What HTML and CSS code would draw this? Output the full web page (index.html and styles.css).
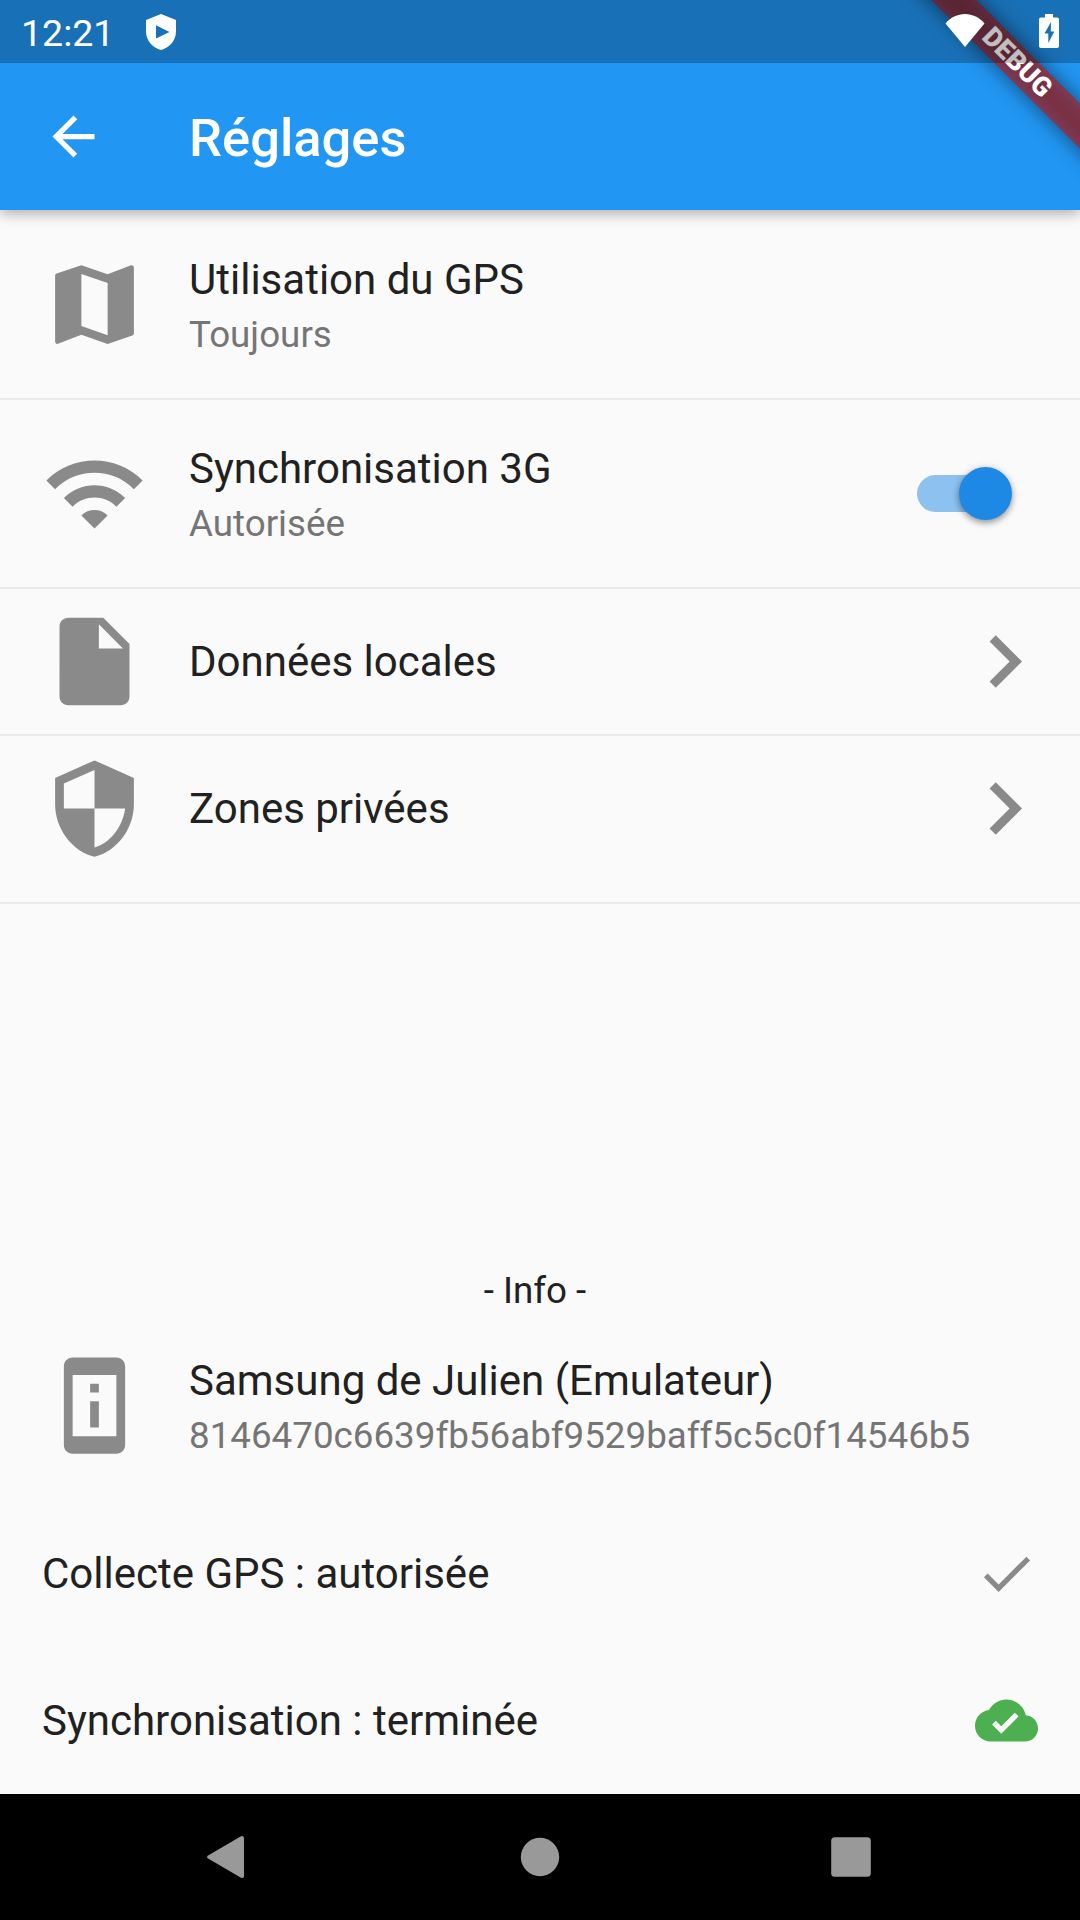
FILE: index.html
```html
<!DOCTYPE html>
<html lang="fr">
<head>
<meta charset="utf-8">
<title>Réglages</title>
<link rel="stylesheet" href="styles.css">
</head>
<body>
<div class="screen">
  <header class="app-bar">
    <svg class="icon-small" viewBox="0 0 24 24"><path d="M20 11H7.83l5.59-5.59L12 4l-8 8 8 8 1.41-1.41L7.83 13H20v-2z"/></svg>
    <h1 class="app-title">Réglages</h1>
  </header>

  <main class="content">
    <section class="settings">
      <div class="tile tall divided">
        <svg class="icon" viewBox="0 0 24 24"><path d="M20.5 3l-.16.03L15 5.1 9 3 3.36 4.9c-.21.07-.36.25-.36.48V20.5c0 .28.22.5.5.5l.16-.03L9 18.9l6 2.1 5.64-1.9c.21-.07.36-.25.36-.48V3.5c0-.28-.22-.5-.5-.5zM15 19l-6-2.11V5l6 2.11V19z"/></svg>
        <div class="texts two-line"><div class="title">Utilisation du GPS</div><div class="subtitle">Toujours</div></div>
      </div>
      <div class="tile tall divided">
        <svg class="icon" viewBox="0 0 24 24"><path d="M1 9l2 2c4.97-4.97 13.03-4.97 18 0l2-2C16.93 2.93 7.08 2.93 1 9zm8 8l3 3 3-3c-1.65-1.66-4.34-1.66-6 0zm-4-4l2 2c2.76-2.76 7.24-2.76 10 0l2-2C15.14 9.14 8.87 9.14 5 13z"/></svg>
        <div class="texts two-line"><div class="title">Synchronisation 3G</div><div class="subtitle">Autorisée</div></div>
        <div class="switch"><span class="thumb"></span></div>
      </div>
      <div class="tile divided link">
        <svg class="icon" viewBox="0 0 24 24"><path d="M6 2c-1.1 0-1.99.9-1.99 2L4 20c0 1.1.89 2 1.99 2H18c1.1 0 2-.9 2-2V8l-6-6H6zm7 7V3.5L18.5 9H13z"/></svg>
        <div class="texts"><div class="title">Données locales</div></div>
        <svg class="icon" viewBox="0 0 24 24"><path d="M10 6L8.59 7.41 13.17 12l-4.58 4.59L10 18l6-6z"/></svg>
      </div>
      <div class="tile link">
        <svg class="icon" viewBox="0 0 24 24"><path d="M12 1L3 5v6c0 5.55 3.84 10.74 9 12 5.16-1.26 9-6.45 9-12V5l-9-4zm0 10.99h7c-.53 4.12-3.28 7.79-7 8.94V12H5V6.3l7-3.11v8.8z"/></svg>
        <div class="texts"><div class="title">Zones privées</div></div>
        <svg class="icon" viewBox="0 0 24 24"><path d="M10 6L8.59 7.41 13.17 12l-4.58 4.59L10 18l6-6z"/></svg>
      </div>
    </section>

    <section class="info">
      <div class="info-heading">- Info -</div>
      <div class="tile tall">
        <svg class="icon" viewBox="0 0 24 24"><path d="M13 7h-2v2h2V7zm0 4h-2v6h2v-6zm4-9.99L7 1c-1.1 0-2 .9-2 2v18c0 1.1.9 2 2 2h10c1.1 0 2-.9 2-2V3c0-1.1-.9-1.99-2-1.99zM17 19H7V5h10v14z"/></svg>
        <div class="texts two-line"><div class="title">Samsung de Julien (Emulateur)</div><div class="subtitle">8146470c6639fb56abf9529baff5c5c0f14546b5</div></div>
      </div>
      <div class="tile">
        <div class="texts"><div class="title">Collecte GPS : autorisée</div></div>
        <svg class="icon-small" viewBox="0 0 24 24"><path d="M9 16.17L4.83 12l-1.42 1.41L9 19 21 7l-1.41-1.41z"/></svg>
      </div>
      <div class="tile">
        <div class="texts"><div class="title">Synchronisation : terminée</div></div>
        <svg class="icon-small done" viewBox="0 0 24 24"><path d="M19.35 10.04C18.67 6.59 15.64 4 12 4 9.11 4 6.6 5.64 5.35 8.04 2.34 8.36 0 10.91 0 14c0 3.31 2.69 6 6 6h13c2.76 0 5-2.24 5-5 0-2.64-2.05-4.78-4.65-4.96zM10 17l-3.5-3.5 1.41-1.41L10 14.17 15.18 9l1.41 1.41L10 17z"/></svg>
      </div>
    </section>
  </main>

  <nav class="nav-bar">
    <svg class="nav-icon" viewBox="0 0 84 84"><path d="M21.500 40.200L54 21.300Q57 20 57 23.500V60.500Q57 64 54 62.700L21.500 43.800Q18.500 42 21.500 40.200z"/></svg>
    <svg class="nav-icon" viewBox="0 0 84 84"><circle cx="42" cy="42" r="19.200"/></svg>
    <svg class="nav-icon" viewBox="0 0 84 84"><rect x="22.200" y="22.200" width="39.600" height="39.600" rx="3.500"/></svg>
  </nav>

  <div class="ribbon-corner">
    <div class="ribbon ribbon-shadow"></div>
    <div class="ribbon ribbon-band">DEBUG</div>
  </div>

  <div class="status-bar">
    <span class="clock">12:21</span>
    <svg class="status-shield" viewBox="0 0 30 36"><path fill-rule="evenodd" d="M15 0L30 6v11.500C30 27 23 34 15 36 7 34 0 27 0 17.500V6zM10 11.300v13.200L23.500 17.900z"/></svg>
    <div class="status-right">
      <svg class="status-wifi" viewBox="0 0 40 33"><path d="M20 33L.500 9.500C5.500 3.500 12.500 0 20 0s14.500 3.500 19.500 9.500z"/></svg>
      <svg class="status-battery" viewBox="0 0 20 34"><path fill-rule="evenodd" d="M6 0h8v3.500h4a2 2 0 0 1 2 2V32a2 2 0 0 1-2 2H2a2 2 0 0 1-2-2V5.500a2 2 0 0 1 2-2h4zM12 8L5.500 19.500H9.300V29L15.300 17.500H11.800z"/></svg>
    </div>
  </div>
</div>
</body>
</html>
```

FILE: styles.css
```css
* {
  box-sizing: border-box;
}

body {
  margin: 0;
  font-family: Roboto, "Noto Sans", sans-serif;
  color: #212121;
  background: #fafafa;
}

svg {
  display: block;
  flex: none;
  fill: currentColor;
}

.screen {
  position: relative;
  display: flex;
  flex-direction: column;
  width: 1080px;
  height: 1920px;
  overflow: hidden;
  background: #fafafa;
}

/* App bar */
.app-bar {
  display: flex;
  align-items: center;
  gap: 84px;
  height: 210px;
  padding: 63px 42px 0;
  color: #fff;
  background: #2196f3;
  box-shadow: 0 4px 12px rgba(0, 0, 0, .26), 0 2px 18px rgba(0, 0, 0, .06);
  flex: none;
}

.app-bar .icon-small {
  color: #fff;
}

.app-title {
  margin: 0;
  padding-top: 3px;
  font-size: 52.5px;
  font-weight: 500;
  line-height: 62px;
}

/* List */
.content {
  flex: 1;
  display: flex;
  flex-direction: column;
  justify-content: space-between;
}

.settings {
  padding-bottom: 21px;
}

.divided,
.settings {
  box-shadow: 0 1px 0 #eaeaea, inset 0 -1px 0 #eaeaea;
}

.tile {
  display: flex;
  align-items: center;
  gap: 42px;
  height: 147px;
  padding: 0 42px;
}

.tall {
  height: 189px;
}

.link {
  padding-right: 23px;
}

.icon {
  width: 105px;
  height: 105px;
  color: #8a8a8a;
}

.icon-small {
  width: 63px;
  height: 63px;
  color: #8a8a8a;
}

.done {
  color: #4caf50;
}

.texts {
  flex: 1;
  white-space: nowrap;
}

.two-line {
  padding-top: 6px;
}

.title {
  font-size: 42px;
  line-height: 54px;
}

.subtitle {
  margin-top: 1px;
  font-size: 36.75px;
  line-height: 54px;
  color: #757575;
}

.switch {
  display: flex;
  align-items: center;
  justify-content: flex-end;
  width: 87px;
  height: 37px;
  margin-right: 34px;
  border-radius: 19px;
  background: #8cc1f0;
}

.thumb {
  flex: none;
  width: 53px;
  height: 53px;
  margin-right: -8px;
  border-radius: 50%;
  background: #1e88e5;
  box-shadow: 0 3px 6px rgba(0, 0, 0, .32), 0 1px 8px rgba(0, 0, 0, .14);
}

.info-heading {
  padding-right: 10px;
  font-size: 36.75px;
  line-height: 41px;
  text-align: center;
}

/* System navigation */
.nav-bar {
  display: flex;
  align-items: center;
  justify-content: center;
  gap: 227px;
  height: 126px;
  background: #000;
  color: #999;
  flex: none;
}

.nav-icon {
  width: 84px;
  height: 84px;
}

/* Corner ribbon, drawn over the app bar */
.ribbon-corner {
  position: absolute;
  top: 0;
  right: 0;
  width: 210px;
  height: 210px;
  overflow: hidden;
}

.ribbon {
  position: absolute;
  top: 47px;
  left: -3px;
  width: 300px;
  height: 31.5px;
  transform: rotate(45deg);
}

.ribbon-shadow {
  background: rgba(0, 0, 0, .5);
  filter: blur(10.4px);
}

.ribbon-band {
  background: rgba(183, 28, 28, .627);
  color: #fff;
  font-size: 26.8px;
  font-weight: 900;
  line-height: 31.5px;
  text-align: center;
}

/* System status bar, a tinted layer over the app */
.status-bar {
  position: absolute;
  top: 0;
  left: 0;
  display: flex;
  align-items: flex-start;
  width: 1080px;
  height: 63px;
  padding: 14px 21px 0;
  color: #fff;
  background: rgba(0, 0, 0, .25);
}

.clock {
  width: 125px;
  font-size: 37.5px;
  line-height: 38px;
}

.status-shield {
  width: 30px;
  height: 36px;
}

.status-right {
  display: flex;
  gap: 54.5px;
  margin-left: auto;
}

.status-wifi {
  width: 40px;
  height: 33px;
}

.status-battery {
  width: 20px;
  height: 34px;
}
```
